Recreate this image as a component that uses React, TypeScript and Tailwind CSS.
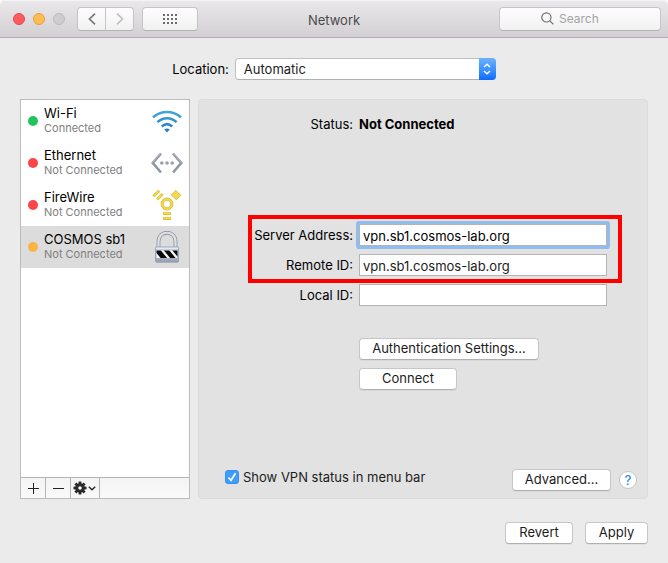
import React, { useState } from "react";

const push =
  "h-[22px] rounded-[4px] border border-[#c6c6c6] border-b-[#b0b0b0] bg-white pb-[2px] text-center text-[13px] leading-4 text-[#1c1c1c] shadow-[0_1px_0_rgba(0,0,0,0.04)]";
const field =
  "h-[22px] w-full min-w-0 border border-[#b4b4b4] bg-white px-[3px] pt-[2px] text-[13px] leading-4 text-[#1c1c1c] outline-none focus:outline-none";
const toolButton =
  "flex h-6 items-center justify-center border border-[#c6c5c6] border-b-[#b5b4b5] bg-linear-to-b from-[#fdfdfd] to-[#f1f1f1]";

function WifiIcon() {
  return (
    <svg width="32" height="32" viewBox="0 0 32 32" fill="none" stroke="url(#wifi)" strokeWidth="2.6">
      <defs>
        <linearGradient id="wifi" gradientUnits="userSpaceOnUse" x1="0" y1="5" x2="0" y2="27">
          <stop offset="0" stopColor="#44a9dc" />
          <stop offset="1" stopColor="#1f78c4" />
        </linearGradient>
      </defs>
      <path d="M2 12.400C10 5.200 22 5.200 30 12.400" />
      <path d="M6.400 17.100C12 11.900 20 11.900 25.600 17.100" />
      <path d="M10.800 21.500C14 18.700 18 18.700 21.200 21.500" />
      <path d="M13.200 24.600Q16 22.600 18.800 24.600L16 27.600Z" fill="#2680c8" stroke="none" />
    </svg>
  );
}

function EthernetIcon() {
  return (
    <svg width="32" height="32" viewBox="0 0 32 32" fill="none">
      <path d="M10 6.500L1.800 16L10 25.500M22 6.500L30.200 16L22 25.500" stroke="#8f96a3" strokeWidth="2.600" />
      <path d="M9.500 6.500L1.500 15.500M22.500 6.500L30.500 15.500" stroke="#b4bac4" strokeWidth="1" />
      <circle cx="10.800" cy="16" r="1.800" fill="#9aa1ad" />
      <circle cx="16" cy="16" r="1.800" fill="#9aa1ad" />
      <circle cx="21.200" cy="16" r="1.800" fill="#9aa1ad" />
    </svg>
  );
}

function FireWireIcon() {
  return (
    <svg width="32" height="32" viewBox="0 0 32 32" fill="none" stroke="#dcbb35">
      <circle cx="16" cy="15" r="4.800" strokeWidth="3.200" />
      <circle cx="16" cy="15" r="4.800" strokeWidth="1.900" stroke="#f5d84f" />
      <path d="M24.600 1.400L29.800 6.200L25.200 10.800L20.400 6Z" fill="#f5d84f" strokeWidth=".9" />
      <path d="M2.300 7.300L8.300 1.700M6 10.500L11.800 5" strokeWidth="2.800" />
      <path d="M2.700 7L8 2M6.300 10.200L11.500 5.300" strokeWidth="1.600" stroke="#f5d84f" />
      <path d="M12 24.500H20M12 29.500H20" strokeWidth="3" />
      <path d="M12.500 24.300H19.500M12.500 29.300H19.500" strokeWidth="1.600" stroke="#f7dc55" />
    </svg>
  );
}

function LockIcon() {
  return (
    <svg width="32" height="32" viewBox="0 0 32 32" fill="none">
      <defs>
        <linearGradient id="metal" x1="0" y1="0" x2="0" y2="1">
          <stop offset="0" stopColor="#d3dae4" />
          <stop offset="1" stopColor="#94a0b1" />
        </linearGradient>
        <clipPath id="band"><rect x="5.500" y="19.500" width="21" height="7.500" /></clipPath>
      </defs>
      <path d="M7.500 17V10.500C7.500 -1.200 24.500 -1.200 24.500 10.500V17" stroke="#8d949e" strokeWidth="3.800" />
      <path d="M7.500 17V10.500C7.500 -1.200 24.500 -1.200 24.500 10.500V17" stroke="#dce0e5" strokeWidth="2.200" />
      <rect x="4.500" y="16" width="23" height="15.200" rx="1" fill="url(#metal)" stroke="#8e99aa" strokeWidth=".8" />
      <path d="M5 17.200H27" stroke="#eef2f7" />
      <g clipPath="url(#band)">
        <path d="M5 19H27V28H5Z" fill="#f7f7f7" />
        <path d="M3 19H9.500L16.500 27.500H10ZM12.500 19H18L25 27.500H19.500ZM21 19H26.500L33.500 27.500H28Z" fill="#0a0a0a" />
      </g>
    </svg>
  );
}

function GearIcon() {
  const teeth = [0, 45, 90, 135];
  return (
    <svg width="14" height="14" viewBox="0 0 14 14">
      {teeth.map((a) => (
        <rect key={a} x="5.600" y=".5" width="2.800" height="13" fill="#282828" transform={`rotate(${a} 7 7)`} />
      ))}
      <circle cx="7" cy="7" r="4.700" fill="#282828" />
      <circle cx="7" cy="7" r="1.800" fill="#f7f7f7" />
    </svg>
  );
}

const services = [
  { name: "Wi-Fi", state: "Connected", dot: "bg-[#21c45a]", icon: <WifiIcon /> },
  { name: "Ethernet", state: "Not Connected", dot: "bg-[#fc4449]", icon: <EthernetIcon /> },
  { name: "FireWire", state: "Not Connected", dot: "bg-[#fc4449]", icon: <FireWireIcon /> },
  { name: "COSMOS sb1", state: "Not Connected", dot: "bg-[#fdb244]", icon: <LockIcon /> },
];

function TitleBar() {
  return (
    <header className="grid h-[38px] grid-cols-[1fr_auto_1fr] items-center rounded-t-[5px] border-b border-[#b1afb1] bg-linear-to-b from-[#eae8ea] to-[#d2d0d2] px-[7px] shadow-[inset_0_1px_0_#f5f4f5]">
      <div className="flex items-center pl-[6px]">
        <div className="flex gap-2">
          <button aria-label="Close" className="size-3 rounded-full border border-[#e2484d] bg-[#ff5c5f]" />
          <button aria-label="Minimize" className="size-3 rounded-full border border-[#e2a03f] bg-[#ffbd4f]" />
          <button aria-label="Zoom" disabled className="size-3 rounded-full border border-[#bbb9bb] bg-[#cfcdcf]" />
        </div>
        <div className="ml-3 flex">
          <button aria-label="Back" className={`${toolButton} w-[29px] rounded-l-[4px]`}>
            <svg width="8" height="12" viewBox="0 0 8 12" fill="none" stroke="#777" strokeWidth="1.700"><path d="M7 .7L1.500 6L7 11.300" /></svg>
          </button>
          <button aria-label="Forward" disabled className={`${toolButton} -ml-px w-[29px] rounded-r-[4px]`}>
            <svg width="8" height="12" viewBox="0 0 8 12" fill="none" stroke="#c0c0c0" strokeWidth="1.700"><path d="M1 .7L6.500 6L1 11.300" /></svg>
          </button>
        </div>
        <button aria-label="Show All" className={`${toolButton} ml-2 w-14 rounded-[4px]`}>
          <svg width="14" height="10" viewBox="0 0 14 10" fill="#6c6c6c">
            {[0, 4, 8].map((y) => [0, 4, 8, 12].map((x) => <rect key={`${x}-${y}`} x={x} y={y} width="2" height="2" />))}
          </svg>
        </button>
      </div>
      <h1 className="pt-[3px] text-[13px] leading-4 text-[#4b4b4b]">Network</h1>
      <label className={`${toolButton} w-[162px] justify-start gap-[5px] justify-self-end rounded-[4px] pl-[41px]`}>
        <svg className="shrink-0" width="13" height="13" viewBox="0 0 13 13" fill="none" stroke="#6e6e6e" strokeWidth="1.200"><circle cx="5.400" cy="5.400" r="4.600" /><path d="M8.700 8.700L12.400 12.400" /></svg>
        <input type="search" aria-label="Search" placeholder="Search" className="w-full min-w-0 bg-transparent text-[12px] leading-4 outline-none placeholder:text-[#a3a3a3]" />
      </label>
    </header>
  );
}

function Sidebar() {
  const [selected, setSelected] = useState(3);
  return (
    <aside className="flex w-[170px] shrink-0 flex-col border border-[#bcbcbc] bg-white">
      <ul className="flex-1">
        {services.map((s, i) => (
          <li key={s.name}>
            <button
              onClick={() => setSelected(i)}
              className={`flex h-[42px] w-full items-center pr-[6px] pl-[7px] text-left ${i === selected ? "bg-[#dcdcdc]" : ""}`}
            >
              <span className={`size-[10px] shrink-0 rounded-full ${s.dot}`} />
              <span className="ml-[6px] flex-1">
                <span className="block text-[13px] leading-[15px] text-black">{s.name}</span>
                <span className="block text-[11px] leading-[15px] text-[#808080]">{s.state}</span>
              </span>
              {s.icon}
            </button>
          </li>
        ))}
      </ul>
      <div className="flex h-[21px] border-t border-[#b4b4b4] bg-linear-to-b from-[#f4f4f4] to-[#f9f9f9]">
        <button aria-label="Add service" className="flex w-[25px] items-center justify-center border-r border-[#b4b4b4]">
          <svg width="11" height="11" viewBox="0 0 11 11" stroke="#222"><path d="M5.500 0V11M0 5.500H11" /></svg>
        </button>
        <button aria-label="Remove service" className="flex w-[25px] items-center justify-center border-r border-[#b4b4b4]">
          <svg width="11" height="11" viewBox="0 0 11 11" stroke="#222"><path d="M0 5.500H11" /></svg>
        </button>
        <button aria-label="Actions" className="flex w-[29px] items-center justify-center border-r border-[#b4b4b4] pr-px">
          <GearIcon />
          <svg className="ml-px" width="8" height="5" viewBox="0 0 8 5" fill="none" stroke="#282828" strokeWidth="1.500"><path d="M.8 .8L4 3.800L7.200 .8" /></svg>
        </button>
      </div>
    </aside>
  );
}

function Row({ id, label, children }: { id?: string; label: string; children: React.ReactNode }) {
  return (
    <div className="grid grid-cols-[154px_1fr] items-center gap-[6px]">
      {id ? (
        <label htmlFor={id} className="text-right text-[13px] leading-4 text-black">{label}</label>
      ) : (
        <span className="text-right text-[13px] leading-4 text-black">{label}</span>
      )}
      {children}
    </div>
  );
}

function Details() {
  return (
    <section className="flex min-w-0 flex-1 flex-col rounded-[4px] border border-[#dcdcdc] bg-[#e2e2e2] pt-4 pb-[7px]">
      <div className="pr-10">
        <Row label="Status:">
          <strong className="text-[13px] leading-4 font-bold text-black">Not Connected</strong>
        </Row>
        <div className="relative mt-[92px] flex flex-col gap-2">
          <Row id="server" label="Server Address:">
            <input id="server" defaultValue="vpn.sb1.cosmos-lab.org" className={`${field} rounded-[1px] border-[#74a3dc] text-black ring-3 ring-[#8fbdee]`} />
          </Row>
          <Row id="remote" label="Remote ID:">
            <input id="remote" defaultValue="vpn.sb1.cosmos-lab.org" className={field} />
          </Row>
          <div className="pointer-events-none absolute -top-[9px] -right-[15px] -bottom-[7px] left-[49px] border-4 border-[#ff0000]" />
        </div>
        <div className="mt-2">
          <Row id="local" label="Local ID:">
            <input id="local" className={field} />
          </Row>
        </div>
        <div className="mt-8 ml-40 flex flex-col items-start gap-2">
          <button className={`${push} w-[180px]`}>Authentication Settings...</button>
          <button className={`${push} w-[98px]`}>Connect</button>
        </div>
      </div>
      <div className="mt-auto flex items-start pr-[10px] pl-[26px]">
        <label className="flex items-center gap-1 text-[13px] leading-4 text-[#1c1c1c]">
          <span className="relative size-[14px]">
            <input type="checkbox" defaultChecked className="peer block size-[14px] appearance-none rounded-[3px] border border-[#b4b4b4] bg-white checked:border-[#358fef] checked:bg-[#419bf9]" />
            <svg className="pointer-events-none absolute inset-0 hidden peer-checked:block" width="14" height="14" viewBox="0 0 14 14" fill="none" stroke="#fff" strokeWidth="1.700"><path d="M3.500 7.500L6 10.300L10.500 3.300" /></svg>
          </span>
          Show VPN status in menu bar
        </label>
        <button className={`${push} ml-auto w-[99px]`}>Advanced...</button>
        <button aria-label="Help" className="ml-2 flex size-[18px] items-center justify-center self-center rounded-full border border-[#c6c6c6] bg-white text-[13px] leading-4 font-medium text-[#2f8ff5]">?</button>
      </div>
    </section>
  );
}

export default function App() {
  return (
    <div className="flex min-h-screen flex-col rounded-t-[5px] bg-[#ebebeb] font-['Inter','Liberation_Sans',sans-serif]">
      <TitleBar />
      <main className="flex flex-1 flex-col px-5 pb-[19px]">
        <div className="mt-5 flex items-center justify-center gap-[6px]">
          <label htmlFor="location" className="text-[13px] leading-4 text-black">Location:</label>
          <div className="relative">
            <select id="location" className="block h-[22px] w-[261px] appearance-none rounded-[4px] border border-[#c0c0c0] border-b-[#b0b0b0] bg-white pl-2 text-[13px] leading-4 text-[#1c1c1c]">
              <option>Automatic</option>
            </select>
            <span className="pointer-events-none absolute inset-y-0 right-0 flex w-[17px] items-center justify-center rounded-r-[4px] bg-linear-to-b from-[#6bb3fa] to-[#0a6cff]">
              <svg width="8" height="12" viewBox="0 0 8 12" fill="none" stroke="#fff" strokeWidth="1.500"><path d="M1 4L4 1.200L7 4M1 8L4 10.800L7 8" /></svg>
            </span>
          </div>
        </div>
        <div className="mt-[19px] flex flex-1 gap-2">
          <Sidebar />
          <Details />
        </div>
        <div className="mt-[23px] flex justify-end gap-3">
          <button className={`${push} w-[68px]`}>Revert</button>
          <button className={`${push} w-[63px]`}>Apply</button>
        </div>
      </main>
    </div>
  );
}
